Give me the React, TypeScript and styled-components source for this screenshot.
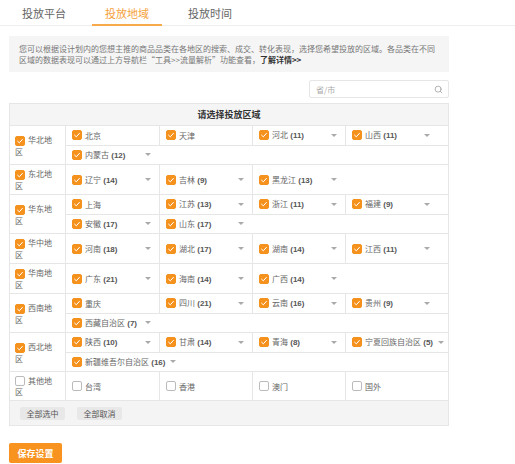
import * as React from "react";
import styled, { createGlobalStyle } from "styled-components";
import { Search } from "lucide-react";

type Province = { name: string; count?: number };
type Region = { name: string; checked: boolean; provinces: Province[] };

const regions: Region[] = [
  {
    name: "华北地区",
    checked: true,
    provinces: [
      { name: "北京" },
      { name: "天津" },
      { name: "河北", count: 11 },
      { name: "山西", count: 11 },
      { name: "内蒙古", count: 12 },
    ],
  },
  {
    name: "东北地区",
    checked: true,
    provinces: [
      { name: "辽宁", count: 14 },
      { name: "吉林", count: 9 },
      { name: "黑龙江", count: 13 },
    ],
  },
  {
    name: "华东地区",
    checked: true,
    provinces: [
      { name: "上海" },
      { name: "江苏", count: 13 },
      { name: "浙江", count: 11 },
      { name: "福建", count: 9 },
      { name: "安徽", count: 17 },
      { name: "山东", count: 17 },
    ],
  },
  {
    name: "华中地区",
    checked: true,
    provinces: [
      { name: "河南", count: 18 },
      { name: "湖北", count: 17 },
      { name: "湖南", count: 14 },
      { name: "江西", count: 11 },
    ],
  },
  {
    name: "华南地区",
    checked: true,
    provinces: [
      { name: "广东", count: 21 },
      { name: "海南", count: 14 },
      { name: "广西", count: 14 },
    ],
  },
  {
    name: "西南地区",
    checked: true,
    provinces: [
      { name: "重庆" },
      { name: "四川", count: 21 },
      { name: "云南", count: 16 },
      { name: "贵州", count: 9 },
      { name: "西藏自治区", count: 7 },
    ],
  },
  {
    name: "西北地区",
    checked: true,
    provinces: [
      { name: "陕西", count: 10 },
      { name: "甘肃", count: 14 },
      { name: "青海", count: 8 },
      { name: "宁夏回族自治区", count: 5 },
      { name: "新疆维吾尔自治区", count: 16 },
    ],
  },
  {
    name: "其他地区",
    checked: false,
    provinces: [
      { name: "台湾" },
      { name: "香港" },
      { name: "澳门" },
      { name: "国外" },
    ],
  },
];

const chunk = (list: Province[], size: number) => {
  const rows: Province[][] = [];
  for (let i = 0; i < list.length; i += size) rows.push(list.slice(i, i + size));
  return rows;
};

const Check = ({ checked }: { checked: boolean }) => (
  <Box $checked={checked}>
    {checked && (
      <svg width="8" height="8" viewBox="0 0 8 8">
        <polyline
          points="1.6,4.2 3.3,5.8 6.4,2.4"
          fill="none"
          stroke="#fff"
          strokeWidth="1"
          strokeLinecap="round"
          strokeLinejoin="round"
        />
      </svg>
    )}
  </Box>
);

const App = () => {
  return (
    <>
      <GlobalStyle />
      <Page>
        <Tabs>
          <Tab>投放平台</Tab>
          <Tab $active>投放地域</Tab>
          <Tab>投放时间</Tab>
        </Tabs>
        <Content>
          <Notice>
            您可以根据设计划内的您想主推的商品品类在各地区的搜索、成交、转化表现，选择您希望投放的区域。各品类在不同
            <br />
            区域的数据表现可以通过上方导航栏“工具&gt;&gt;流量解析”功能查看，
            <strong>了解详情&gt;&gt;</strong>
          </Notice>
          <SearchRow>
            <SearchBox>
              <SearchInput placeholder="省/市" />
              <Search size={9} color="#999" strokeWidth={2} />
            </SearchBox>
          </SearchRow>
          <Table>
            <TableHead>请选择投放区域</TableHead>
            {regions.map((region) => (
              <RegionRow key={region.name}>
                <RegionCell>
                  <RegionName>
                    <Check checked={region.checked} />
                    {region.name}
                  </RegionName>
                </RegionCell>
                <ProvinceArea>
                  {chunk(region.provinces, 4).map((row, i) => (
                    <ProvinceRow key={i}>
                      {row.map((p) => (
                        <ProvinceCell key={p.name}>
                          <Check checked={region.checked} />
                          <Label>
                            {p.name}
                            {p.count !== undefined && <Count> ({p.count})</Count>}
                          </Label>
                          {p.count !== undefined && <Caret />}
                        </ProvinceCell>
                      ))}
                    </ProvinceRow>
                  ))}
                </ProvinceArea>
              </RegionRow>
            ))}
            <TableFoot>
              <GreyButton>全部选中</GreyButton>
              <GreyButton>全部取消</GreyButton>
            </TableFoot>
          </Table>
          <SaveButton>保存设置</SaveButton>
        </Content>
      </Page>
    </>
  );
};

export default App;

const GlobalStyle = createGlobalStyle`
  body {
    margin: 0;
    background: #fff;
    font-family: "Noto Sans CJK SC", "Noto Sans", sans-serif;
  }
`;

const Page = styled.div`
  width: 515px;
  height: 464px;
  overflow: hidden;
`;

const Tabs = styled.div`
  display: flex;
  gap: 13px;
  height: 25px;
  padding-left: 9px;
  border-bottom: 1px solid #eeeeee;
`;

const Tab = styled.div<{ $active?: boolean }>`
  width: 70px;
  display: flex;
  align-items: center;
  justify-content: center;
  font-size: 11px;
  color: ${(p) => (p.$active ? "#f5a13a" : "#666")};
  border-bottom: 2px solid ${(p) => (p.$active ? "#f6aa4c" : "transparent")};
  margin-bottom: -1px;
  padding-top: 1px;
  box-sizing: border-box;
`;

const Content = styled.div`
  width: 440px;
  margin-left: 9px;
  padding-top: 10px;
`;

const Notice = styled.div`
  background: #f5f5f5;
  padding: 7px 10px;
  font-size: 8px;
  line-height: 11px;
  color: #777;
  white-space: nowrap;

  strong {
    color: #333;
    font-weight: 700;
  }
`;

const SearchRow = styled.div`
  display: flex;
  justify-content: flex-end;
  margin-top: 8px;
`;

const SearchBox = styled.div`
  width: 140px;
  height: 18px;
  box-sizing: border-box;
  border: 1px solid #e6e6e6;
  border-radius: 2px;
  display: flex;
  align-items: center;
  padding: 0 5px 0 6px;
`;

const SearchInput = styled.input`
  flex: 1;
  min-width: 0;
  border: none;
  outline: none;
  padding: 0;
  font-size: 8px;
  font-family: inherit;
  color: #333;
  background: transparent;

  &::placeholder {
    color: #aaa;
  }
`;

const Table = styled.div`
  margin-top: 5px;
  border: 1px solid #e6e6e6;
`;

const TableHead = styled.div`
  height: 21px;
  background: #f5f5f5;
  border-bottom: 1px solid #e6e6e6;
  display: flex;
  align-items: center;
  justify-content: center;
  font-size: 9px;
  font-weight: 700;
  color: #333;
`;

const RegionRow = styled.div`
  display: grid;
  grid-template-columns: 56px 1fr;
  border-bottom: 1px solid #e6e6e6;
`;

const RegionCell = styled.div`
  display: flex;
  align-items: center;
  padding: 3px 10px 3px 5px;
  border-right: 1px solid #e6e6e6;
  box-sizing: border-box;
`;

const RegionName = styled.div`
  font-size: 8px;
  line-height: 11px;
  color: #666;
`;

const ProvinceArea = styled.div`
  display: flex;
  flex-direction: column;
`;

const ProvinceRow = styled.div`
  flex: 1;
  display: flex;
  min-height: 18.5px;

  & + & {
    border-top: 1px solid #e6e6e6;
  }
`;

const ProvinceCell = styled.div`
  width: 93px;
  flex-shrink: 0;
  box-sizing: border-box;
  display: flex;
  align-items: center;
  padding: 0 8px 0 6px;
  font-size: 8px;
  color: #666;
  white-space: nowrap;

  & + & {
    border-left: 1px solid #e6e6e6;
  }
`;

const Box = styled.span<{ $checked: boolean }>`
  display: inline-flex;
  align-items: center;
  justify-content: center;
  flex-shrink: 0;
  width: 10px;
  height: 10px;
  box-sizing: border-box;
  border-radius: 2px;
  margin-right: 3px;
  background: ${(p) => (p.$checked ? "#f5921e" : "#fff")};
  border: 1px solid ${(p) => (p.$checked ? "#f5921e" : "#bbb")};
  vertical-align: -2px;
`;

const Label = styled.span`
  line-height: 11px;
  margin-right: 5px;
`;

const Count = styled.span`
  font-weight: 700;
  color: #555;
  font-family: "Liberation Sans", "Noto Sans CJK SC", sans-serif;
`;

const Caret = styled.span`
  margin-left: auto;
  flex-shrink: 0;
  width: 0;
  height: 0;
  border-left: 3px solid transparent;
  border-right: 3px solid transparent;
  border-top: 3px solid #aaa;
`;

const TableFoot = styled.div`
  height: 24px;
  background: #f4f4f4;
  display: flex;
  align-items: center;
  gap: 12px;
  padding-left: 10px;
`;

const GreyButton = styled.button`
  height: 13px;
  width: 45px;
  padding: 0;
  border: none;
  border-radius: 2px;
  background: #e8e8e8;
  color: #555;
  font-size: 8px;
  font-family: inherit;
  line-height: 13px;
`;

const SaveButton = styled.button`
  margin-top: 17px;
  width: 53px;
  height: 20px;
  padding: 0;
  border: none;
  border-radius: 2px;
  background: #f7931e;
  color: #fff;
  font-size: 9px;
  font-weight: 700;
  font-family: inherit;
`;
